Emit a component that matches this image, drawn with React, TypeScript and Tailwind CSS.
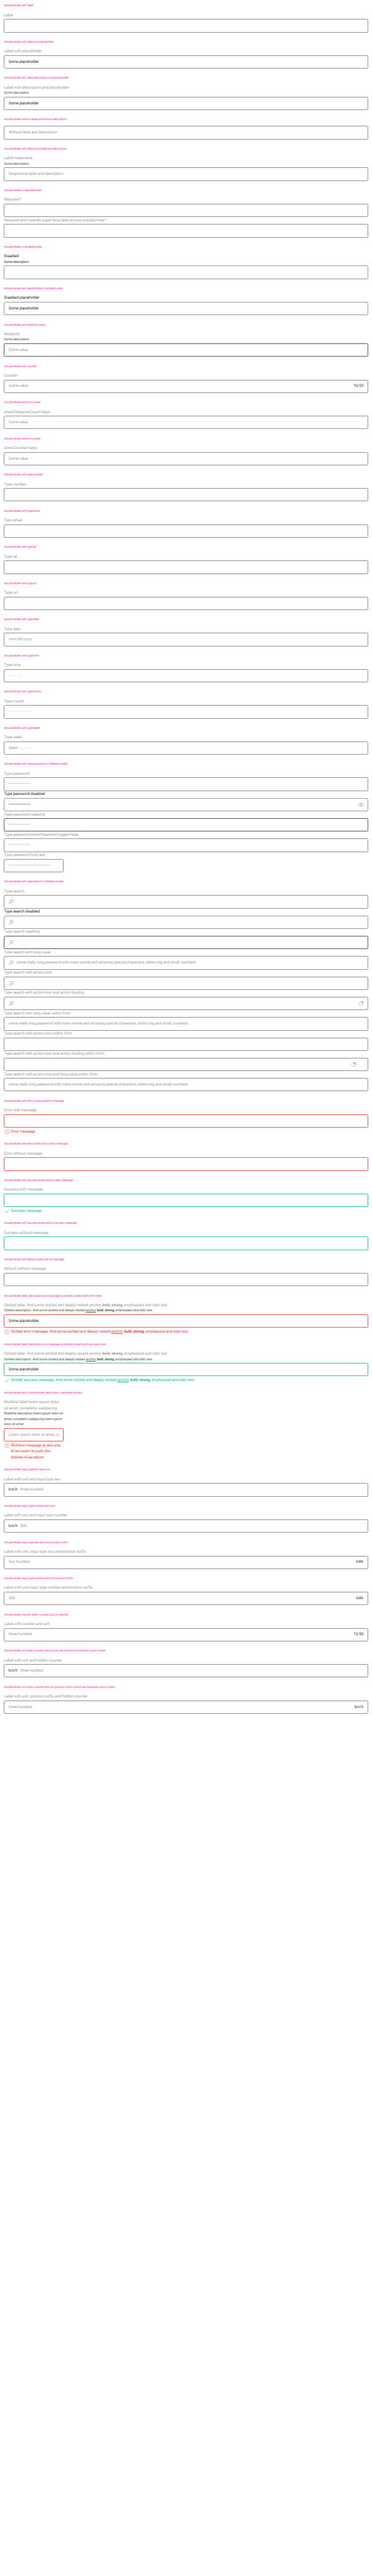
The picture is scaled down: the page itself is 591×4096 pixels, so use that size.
import type { ReactNode } from 'react';

type State = 'default' | 'disabled' | 'readonly' | 'error' | 'success';

const borders: Record<State, string> = {
  default: 'border-[#8f9094]',
  disabled: 'border-[#97989b]',
  readonly: 'border-[#55565a]',
  error: 'border-[#fb5553]',
  success: 'border-[#2bcb92]',
};

const SearchIcon = () => (
  <svg viewBox="0 0 24 24" className="mr-[4px] -ml-[0.8px] size-[9.4px] shrink-0" fill="none" stroke="#77787c" strokeWidth="1.5">
    <ellipse cx="14.5" cy="9.5" rx="6" ry="6" />
    <path d="M10 14 L3.6 20.4" strokeWidth="2.2" />
  </svg>
);

const EyeIcon = () => (
  <svg viewBox="0 0 24 24" className="-mr-[0.8px] size-[9.4px] shrink-0" fill="none" stroke="#8e8f93" strokeWidth="1.6">
    <path d="M1.5 12 C5.5 3.5 18.5 3.5 22.5 12 C18.5 20.5 5.5 20.5 1.5 12 Z" />
    <circle cx="12" cy="12" r="3.6" />
  </svg>
);

const Spinner = () => (
  <svg viewBox="0 0 24 24" className="block size-[9.4px] shrink-0" fill="none" strokeWidth="2">
    <circle cx="12" cy="12" r="8" stroke="#b9babd" />
    <path d="M12 4 A8 8 0 0 1 20 12" stroke="#55565a" />
  </svg>
);

const ErrorIcon = () => (
  <svg viewBox="0 0 24 24" className="size-[9.46px] shrink-0" fill="none" stroke="#fb5553" strokeWidth="1.3">
    <circle cx="13" cy="12" r="9" />
    <path d="M13 7 V13.5 M13 15.5 V17.2" strokeWidth="1.8" />
  </svg>
);

const CheckIcon = () => (
  <svg viewBox="0 0 24 24" className="size-[9.46px] shrink-0" fill="none" stroke="#2bcb92" strokeWidth="1.7">
    <path d="M4.5 13 L9.5 19 L21.5 4.5" />
  </svg>
);

const Case = ({ title, children }: { title: string; children: ReactNode }) => (
  <section className="pb-[6.3px]">
    <h2 className="h-[18.91px] text-[4.728px] leading-[20.2px] tracking-[-0.031em] whitespace-nowrap text-[#ff1fa2]">{title}</h2>
    {children}
  </section>
);

type FieldProps = {
  label?: ReactNode;
  description?: ReactNode;
  state?: State;
  value?: ReactNode;
  placeholder?: string;
  before?: ReactNode;
  after?: ReactNode;
  message?: ReactNode;
  narrow?: boolean;
};

const Field = ({ label, description, state = 'default', value, placeholder, before, after, message, narrow }: FieldProps) => {
  const disabled = state === 'disabled';
  return (
    <div className={narrow ? 'w-[94.56px]' : 'w-full'}>
      {label && (
        <div className={`pt-[0.5px] text-[6.304px] leading-[9.47px] tracking-[-0.019em] ${disabled ? 'text-[#2a2b2e]' : 'text-[#9c9da0]'}`}>{label}</div>
      )}
      {description && (
        <div className={`text-[5.516px] leading-[8.565px] tracking-[-0.038em] ${disabled ? 'text-[#333437]' : 'text-[#58595c]'}`}>{description}</div>
      )}
      <div className={label ? 'pt-[1.08px]' : ''}>
        <div className={`flex h-[21.283px] items-center rounded-[1.6px] border px-[6.3px] text-[6.304px] leading-[9.47px] tracking-[-0.025em] ${borders[state]}`}>
          {before}
          <div className={`min-w-0 flex-1 overflow-hidden whitespace-nowrap ${placeholder ? 'text-[#2a2b2e]' : 'text-[#9c9da0]'}`}>{placeholder ?? value}</div>
          {after}
        </div>
      </div>
      {message && (
        <div className={`flex gap-[1.5px] pt-[1.58px] text-[6.304px] leading-[9.47px] tracking-[-0.025em] ${state === 'error' ? 'text-[#f93b3b]' : 'text-[#12c184]'}`}>
          {state === 'error' ? <ErrorIcon /> : <CheckIcon />}
          <div>{message}</div>
        </div>
      )}
    </div>
  );
};

const Dots = ({ dark, count = 13 }: { dark?: boolean; count?: number }) => (
  <span className={`tracking-[0.095em] ${dark ? 'text-[#1f2023]' : ''}`}>{'•'.repeat(count)}</span>
);

const Unit = ({ children }: { children: ReactNode }) => <span className="text-[#3a3b3e]">{children}</span>;
const Prefix = () => <span className="w-[18.1px] shrink-0 text-[#3a3b3e]">km/h</span>;

const Slotted = ({ lead, plainAnchor }: { lead: string; plainAnchor?: boolean }) => (
  <>
    {lead}. And some slotted and deeply nested <span className={plainAnchor ? '' : 'underline decoration-[0.6px] underline-offset-[1px]'}>anchor</span>, <b className="font-bold">bold</b>,{' '}
    <strong className="font-bold">strong</strong>, <em>emphasized</em> and <i>italic</i> text.
  </>
);

const longValue = 'some really long password with many words and amazing special characters, letters big and small, numbers';

export default function App() {
  return (
    <main className="h-[4096px] w-[591px] overflow-hidden bg-white px-[6.304px] pt-[0.3px] font-['Roboto',sans-serif] [text-rendering:geometricPrecision]">
      <Case title="should render with label"><Field label="Label" /></Case>
      <Case title="should render with label and placeholder"><Field label="Label with placeholder" placeholder="Some placeholder" /></Case>
      <Case title="should render with label, description and placeholder">
        <Field label="Label with description and placeholder" description="Some description" placeholder="Some placeholder" />
      </Case>
      <Case title="should render without label and without description"><Field value="Without label and description" /></Case>
      <Case title="should render with responsive label and description">
        <Field label="Label responsive" description="Some description" value="Responsive label and description" />
      </Case>
      <Case title="should render in required state">
        <Field label="Required *" />
        <Field label="Required and insanely super long label across multiple lines *" />
      </Case>
      <Case title="should render in disabled state"><Field state="disabled" label="Disabled" description="Some description" /></Case>
      <Case title="should render with placeholder in disabled state">
        <Field state="disabled" label="Disabled placeholder" placeholder="Some placeholder" />
      </Case>
      <Case title="should render with readonly state">
        <Field state="readonly" label="Readonly" description="Some description" value="Some value" />
      </Case>
      <Case title="should render with counter"><Field label="Counter" value="Some value" after={<Unit>10/20</Unit>} /></Case>
      <Case title="should render without counter"><Field label="showCharacterCount=false" value="Some value" /></Case>
      <Case title="should render without counter"><Field label="showCounter=false" value="Some value" /></Case>
      <Case title="should render with type number"><Field label="Type number" /></Case>
      <Case title="should render with type email"><Field label="Type email" /></Case>
      <Case title="should render with type tel"><Field label="Type tel" /></Case>
      <Case title="should render with type url"><Field label="Type url" /></Case>
      <Case title="should render with type date">
        <Field label="Type date" value={<span className="pl-[0.6px] tracking-[0.015em]">mm/dd/yyyy</span>} />
      </Case>
      <Case title="should render with type time">
        <Field label="Type time" value={<span className="pl-[0.6px] tracking-[0.12em]">--:-- --</span>} />
      </Case>
      <Case title="should render with type month">
        <Field label="Type month" value={<span className="pl-[0.6px] tracking-[0.155em]">--------- ----</span>} />
      </Case>
      <Case title="should render with type week">
        <Field label="Type week" value={<>Week <span className="tracking-[0.15em]">--, ----</span></>} />
      </Case>
      <Case title="should render with type password in different states">
        <Field label="Type password" value={<Dots />} />
        <Field state="disabled" label="Type password disabled" value={<Dots dark />} after={<EyeIcon />} />
        <Field state="readonly" label="Type password readonly" value={<Dots />} />
        <Field label="Type password showPasswordToggle=false" value={<Dots />} />
        <Field narrow label="Type password long text" value={<Dots count={26} />} after={<span className="w-[13.2px] shrink-0" />} />
      </Case>
      <Case title="should render with type search in different states">
        <Field label="Type search" before={<SearchIcon />} />
        <Field state="disabled" label="Type search disabled" before={<SearchIcon />} />
        <Field state="readonly" label="Type search readonly" before={<SearchIcon />} />
        <Field label="Type search with long value" before={<SearchIcon />} value={longValue} />
        <Field label="Type search with action-icon" before={<SearchIcon />} />
        <Field label="Type search with action-icon and action-loading" before={<SearchIcon />} after={<span className="-mr-[1.2px]"><Spinner /></span>} />
        <Field label="Type search with long value within form" value={longValue} />
        <Field label="Type search with action-icon within form" />
        <Field label="Type search with action-icon and action-loading within form" after={<span className="mr-[11.2px]"><Spinner /></span>} />
        <Field label="Type search with action-icon and long value within form" value={longValue} />
      </Case>
      <Case title="should render with error state and error message"><Field state="error" label="Error with message" message="Error message" /></Case>
      <Case title="should render with error state and no error message"><Field state="error" label="Error without message" /></Case>
      <Case title="should render with success state and success message">
        <Field state="success" label="Success with message" message="Success message" />
      </Case>
      <Case title="should render with success state and no success message"><Field state="success" label="Success without message" /></Case>
      <Case title="should render with default state and no message"><Field label="Default without message" /></Case>
      <Case title="should render label, description and message by slotted content with error state">
        <Field
          state="error"
          label={<Slotted lead="Slotted label" plainAnchor />}
          description={<span className="tracking-[-0.03em]"><Slotted lead="Slotted description" /></span>}
          placeholder="Some placeholder"
          message={<Slotted lead="Slotted error message" />}
        />
      </Case>
      <Case title="should render label, description and message by slotted content with success state">
        <Field
          state="success"
          label={<Slotted lead="Slotted label" plainAnchor />}
          description={<span className="tracking-[-0.03em]"><Slotted lead="Slotted description" /></span>}
          placeholder="Some placeholder"
          message={<Slotted lead="Slotted success message" />}
        />
      </Case>
      <Case title="should render with multiline label, description, message and text">
        <Field
          narrow
          state="error"
          label={<>Multiline label lorem ipsum dolor<br />sit amet, consetetur sadipscing</>}
          description={<span className="whitespace-nowrap">Multiline description lorem ipsum dolor sit<br />amet, consetetur sadipscing lorem ipsum<br />dolor sit amet</span>}
          value="Lorem ipsum dolor sit amet, consetetur"
          message={<span className="whitespace-nowrap">Multiline message at vero eos<br />et accusam et justo duo<br />dolores et ea rebum.</span>}
        />
      </Case>
      <Case title="should render input type text with unit"><Field label="Label with unit and input type text" before={<Prefix />} value="three hundred" /></Case>
      <Case title="should render input type number with unit"><Field label="Label with unit and input type number" before={<Prefix />} value="300" /></Case>
      <Case title="should render input type text with unit position suffix">
        <Field label="Label with unit, input type text and position suffix" value="four hundred" after={<Unit>kWh</Unit>} />
      </Case>
      <Case title="should render input type number with unit position suffix">
        <Field label="Label with unit input, type number and position suffix" value="400" after={<Unit>kWh</Unit>} />
      </Case>
      <Case title="should render counter when counter and unit are set">
        <Field label="Label with counter and unit" value="three hundred" after={<Unit>13/50</Unit>} />
      </Case>
      <Case title="should render unit when counter and unit are set and show-character-count is false">
        <Field label="Label with unit and hidden counter" before={<Prefix />} value="three hundred" />
      </Case>
      <Case title="should render unit when counter with unit position suffix and show-character-count is false">
        <Field label="Label with unit, position suffix and hidden counter" value="three hundred" after={<Unit>km/h</Unit>} />
      </Case>
    </main>
  );
}
